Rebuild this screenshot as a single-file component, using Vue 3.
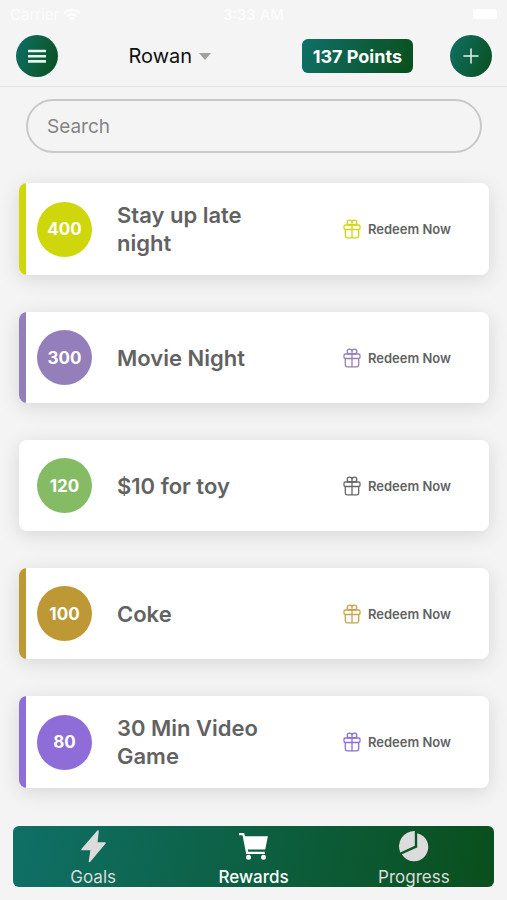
<script setup>
import { ref, computed } from 'vue';

const search = ref('');
const activeTab = ref('Rewards');

const rewards = [
  { id: 1, points: 400, name: 'Stay up late night', color: '#d0d60c', icon: '#d0d60c', bar: true },
  { id: 2, points: 300, name: 'Movie Night', color: '#957fba', icon: '#957fba', bar: true },
  { id: 3, points: 120, name: '$10 for toy', color: '#86bb66', icon: '#666666', bar: false },
  { id: 4, points: 100, name: 'Coke', color: '#bd9835', icon: '#c9a24a', bar: true },
  { id: 5, points: 80, name: '30 Min Video Game', color: '#8e6dd9', icon: '#8e6dd9', bar: true },
];

const filteredRewards = computed(() =>
  rewards.filter((r) => r.name.toLowerCase().includes(search.value.toLowerCase()))
);
</script>

<template>
  <div class="page">
    <header>
      <div class="status-bar">
        <span class="carrier">
          Carrier
          <svg width="18" height="13" viewBox="0 0 18 13" fill="none" stroke="currentColor" stroke-width="2.4">
            <path d="M1 5a11.5 11.5 0 0 1 16 0M4 8.3a7 7 0 0 1 10 0" />
            <path d="M9 12.5 6.5 10a3.6 3.6 0 0 1 5 0z" fill="currentColor" stroke="none" />
          </svg>
        </span>
        <span class="time">3:33 AM</span>
        <span class="battery"></span>
      </div>
      <div class="toolbar">
        <button class="round-button" aria-label="Menu">
          <svg width="20" height="16" viewBox="0 0 20 16" stroke="#e8f4ee" stroke-width="2.6">
            <path d="M1 3h18M1 8.2h18M1 13.400h18" />
          </svg>
        </button>
        <button class="profile">
          Rowan
          <svg width="12" height="7" viewBox="0 0 12 7" fill="#a0a0a0"><path d="M0 0h12L6 7z" /></svg>
        </button>
        <button class="points">137 Points</button>
        <button class="round-button" aria-label="Add reward">
          <svg width="16" height="16" viewBox="0 0 16 16" stroke="#e8f4ee" stroke-width="1.5" stroke-linecap="round">
            <path d="M8 1v14M1 8h14" />
          </svg>
        </button>
      </div>
    </header>

    <main>
      <input v-model="search" class="search" type="text" placeholder="Search" aria-label="Search" />

      <ul class="rewards">
        <li v-for="reward in filteredRewards" :key="reward.id" class="card">
          <span v-if="reward.bar" class="bar" :style="{ backgroundColor: reward.color }"></span>
          <span class="badge" :style="{ backgroundColor: reward.color }">{{ reward.points }}</span>
          <h2>{{ reward.name }}</h2>
          <button class="redeem">
            <svg width="18" height="20" viewBox="0 0 18 20" fill="none" :stroke="reward.icon" stroke-width="1.3" stroke-linejoin="round">
              <rect x="1" y="6" width="16" height="4.5" rx="1.3" />
              <path d="M2.3 10.5V17a1.8 1.8 0 0 0 1.8 1.8h9.8a1.8 1.8 0 0 0 1.8-1.8v-6.5M9 6v12.8" />
              <path d="M9 6V3.5A2.4 2.4 0 1 0 6.6 6zM9 6V3.5A2.4 2.4 0 1 1 11.4 6z" />
            </svg>
            Redeem Now
          </button>
        </li>
      </ul>
    </main>

    <nav>
      <a href="#goals" :class="{ active: activeTab === 'Goals' }" @click="activeTab = 'Goals'">
        <svg width="34" height="34" viewBox="0 0 34 34" fill="currentColor" stroke="currentColor" stroke-width="1.6" stroke-linejoin="round">
          <path d="M22 2 6 20.500h9.300L13.500 32.500 29 14h-8.300z" />
        </svg>
        Goals
      </a>
      <a href="#rewards" :class="{ active: activeTab === 'Rewards' }" @click="activeTab = 'Rewards'">
        <svg width="34" height="34" viewBox="0 0 34 34" fill="currentColor">
          <path d="M3 4h5.200l.7 3.200h23l-2.700 13.300H11.800l.4 2.200h16.600v2.200H10.200L6.500 6.200H3z" />
          <circle cx="12.5" cy="28.2" r="2.5" />
          <circle cx="27.500" cy="28.2" r="2.5" />
        </svg>
        Rewards
      </a>
      <a href="#progress" :class="{ active: activeTab === 'Progress' }" @click="activeTab = 'Progress'">
        <svg width="34" height="34" viewBox="0 0 34 34" fill="currentColor">
          <path d="M17.800 2V16.800L3.300 23.400A15.300 15.300 0 0 1 17.800 2z" />
          <path d="M20.200 4.200A14.200 14.200 0 1 1 4.800 25.200L20.200 18.400z" />
        </svg>
        Progress
      </a>
    </nav>
  </div>
</template>

<style>
body {
  margin: 0;
  background-color: #f4f4f4;
}
</style>

<style scoped>
.page {
  display: flex;
  flex-direction: column;
  min-height: 100vh;
  font-family: Inter, "Liberation Sans", sans-serif;
  color: #626262;
}

button {
  border: none;
  padding: 0;
  background: none;
  font-family: inherit;
  cursor: pointer;
}

header {
  border-bottom: 1px solid #e4e4e4;
}

.status-bar {
  display: grid;
  grid-template-columns: 1fr auto 1fr;
  align-items: center;
  height: 28px;
  padding: 0 10px;
  font-size: 15px;
  color: #fcfcfc;
}

.carrier {
  display: flex;
  align-items: center;
  gap: 4px;
}

.time {
  font-weight: 500;
}

.battery {
  justify-self: end;
  width: 24px;
  height: 10px;
  border-radius: 3px;
  background-color: #fff;
}

.toolbar {
  display: grid;
  grid-template-columns: 42px 1fr auto 42px;
  align-items: center;
  height: 56px;
  padding: 0 15px 2px 16px;
}

.round-button {
  display: flex;
  align-items: center;
  justify-content: center;
  width: 42px;
  height: 42px;
  border-radius: 50%;
  background: linear-gradient(110deg, #0f7067, #0a4f1c);
}

.profile {
  display: flex;
  align-items: center;
  justify-content: center;
  gap: 7px;
  padding-right: 20px;
  font-size: 20px;
  color: #111;
}

.points {
  height: 34px;
  margin-right: 37px;
  padding: 0 11px;
  border-radius: 6px;
  background: linear-gradient(110deg, #0f7067, #0a4f1c);
  font-size: 18px;
  font-weight: 700;
  color: #fff;
}

main {
  flex: 1;
  padding: 12px 18px 36px 19px;
}

.search {
  display: block;
  box-sizing: border-box;
  width: calc(100% - 14px);
  height: 54px;
  margin: 0 7px 30px;
  padding: 0 19px;
  border: 2px solid #c8c8c8;
  border-radius: 27px;
  background: transparent;
  font-family: inherit;
  font-size: 19px;
  color: #626262;
  outline: none;
}

.search::placeholder {
  color: #858585;
}

.rewards {
  display: flex;
  flex-direction: column;
  gap: 37px;
  margin: 0;
  padding: 0;
  list-style: none;
}

.card {
  position: relative;
  display: grid;
  grid-template-columns: 55px 1fr 146px;
  align-items: center;
  column-gap: 25px;
  padding: 18px 0 18px 18px;
  border-radius: 8px;
  overflow: hidden;
  background-color: #fff;
  box-shadow: 0 4px 20px rgba(0, 0, 0, 0.12);
}

.bar {
  position: absolute;
  top: 0;
  bottom: 0;
  left: 0;
  width: 7px;
}

.badge {
  display: flex;
  align-items: center;
  justify-content: center;
  height: 55px;
  border-radius: 50%;
  font-size: 17px;
  font-weight: 700;
  color: #fff;
}

h2 {
  max-width: 160px;
  margin: 0;
  font-size: 22px;
  line-height: 28px;
  font-weight: 600;
}

.redeem {
  display: flex;
  align-items: center;
  gap: 7px;
  font-size: 13px;
  font-weight: 600;
  color: #626262;
}

nav {
  position: sticky;
  bottom: 13px;
  display: grid;
  grid-template-columns: repeat(3, 1fr);
  height: 61px;
  margin: 0 13px 13px;
  border-radius: 6px;
  background: linear-gradient(100deg, #0f7067, #0a4f1c);
}

nav a {
  display: flex;
  flex-direction: column;
  align-items: center;
  padding-top: 3px;
  font-size: 17px;
  line-height: 28px;
  color: #dcdcdc;
  text-decoration: none;
}

nav a.active {
  font-weight: 500;
  color: #fff;
}
</style>
